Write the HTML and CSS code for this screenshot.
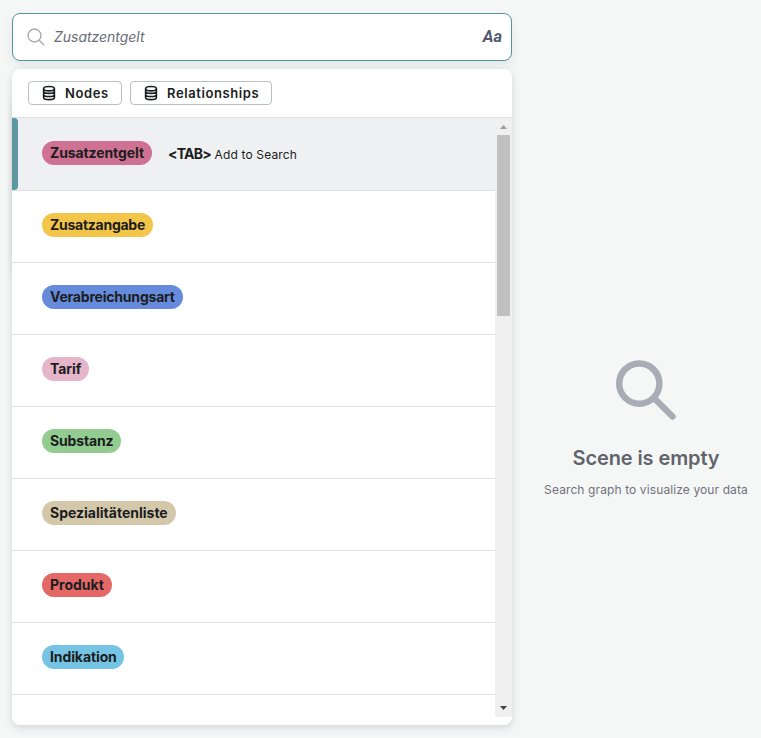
FILE: index.html
```html
<!DOCTYPE html>
<html lang="en">
<head>
<meta charset="utf-8">
<title>Graph search</title>
<link rel="stylesheet" href="styles.css">
</head>
<body>
<div class="app">
  <main class="search">
    <div class="search-box">
      <svg class="search-icon" viewBox="0 0 18 18"><circle cx="7.5" cy="7.5" r="6.5"/><path d="M12.2 12.2L16.7 16.7"/></svg>
      <span class="query">Zusatzentgelt</span>
      <span class="case">Aa</span>
    </div>
    <section class="panel">
      <header class="filters">
        <button class="filter nodes"><svg class="db" viewBox="0 0 14 16"><ellipse cx="7" cy="3.7" rx="5.4" ry="2.2"/><path d="M1.6 3.7v8.8c0 2.8 10.8 2.8 10.8 0v-8.8M1.6 6.3c0 2.8 10.8 2.8 10.8 0M1.6 9.4c0 2.8 10.8 2.8 10.8 0"/></svg><span>Nodes</span></button>
        <button class="filter relationships"><svg class="db" viewBox="0 0 14 16"><ellipse cx="7" cy="3.7" rx="5.4" ry="2.2"/><path d="M1.6 3.7v8.8c0 2.8 10.8 2.8 10.8 0v-8.8M1.6 6.3c0 2.8 10.8 2.8 10.8 0M1.6 9.4c0 2.8 10.8 2.8 10.8 0"/></svg><span>Relationships</span></button>
      </header>
      <div class="results">
        <ul class="list">
          <li class="row selected"><span class="pill zusatzentgelt">Zusatzentgelt</span><span class="hint"><b>&lt;TAB&gt;</b> <span class="action">Add to Search</span></span></li>
          <li class="row"><span class="pill zusatzangabe">Zusatzangabe</span></li>
          <li class="row"><span class="pill verabreichungsart">Verabreichungsart</span></li>
          <li class="row"><span class="pill tarif">Tarif</span></li>
          <li class="row"><span class="pill substanz">Substanz</span></li>
          <li class="row"><span class="pill spezialitaetenliste">Spezialitätenliste</span></li>
          <li class="row"><span class="pill produkt">Produkt</span></li>
          <li class="row"><span class="pill indikation">Indikation</span></li>
        </ul>
        <div class="scrollbar">
          <svg class="arrow up" viewBox="0 0 17 17"><path d="M5 11h7L8.5 7z"/></svg>
          <div class="thumb"></div>
          <svg class="arrow down" viewBox="0 0 17 17"><path d="M5 6h7L8.5 10z"/></svg>
        </div>
      </div>
    </section>
  </main>
  <aside class="empty">
    <svg class="empty-icon" viewBox="0 0 60 60"><circle cx="23.3" cy="23.6" r="20.1"/><path d="M39 39L56.5 56.5"/></svg>
    <h1 class="title">Scene is empty</h1>
    <p class="subtitle">Search graph to visualize your data</p>
  </aside>
</div>
</body>
</html>
```
FILE: styles.css
```css
* { box-sizing: border-box; }
body {
  margin: 0;
  background: #f5f7f7;
  color: #1b1d20;
  font-family: Inter, "Liberation Sans", sans-serif;
  overflow: hidden;
}
.app { display: flex; height: 738px; padding: 13px 0 13px 12px; }
.search { position: relative; z-index: 0; width: 500px; display: flex; flex-direction: column; gap: 8px; }
.search-box {
  height: 48px;
  display: flex;
  align-items: center;
  padding: 0 9px 0 14px;
  background: #fff;
  border: 1px solid #55939e;
  border-radius: 8px;
  box-shadow: 0 4px 8px rgba(12, 26, 37, .08);
}
.search-icon { width: 18px; height: 18px; fill: none; stroke: #a8abb3; stroke-width: 1.4; stroke-linecap: round; }
.query { margin-left: 9px; font: italic 14px/20px Inter, sans-serif; letter-spacing: -.03px; color: #696c74; }
.case { margin-left: auto; font: italic 700 16.5px/20px Roboto, sans-serif; color: #535b70; }
.panel {
  position: relative;
  height: 656px;
  background: #fff;
  border-radius: 8px;
  box-shadow: 0 4px 8px rgba(12, 26, 37, .1), 0 0 6px rgba(12, 26, 37, .06);
}
/* Shadow of the collapsed toolbar behind the panel */
.panel::before {
  content: "";
  position: absolute;
  z-index: -1;
  left: 0;
  top: 30px;
  width: 40px;
  height: 175px;
  border-radius: 8px;
  box-shadow: 0 2px 7px rgba(12, 26, 37, .1);
}
.filters { height: 49px; display: flex; gap: 8px; padding: 12px 16px; border-bottom: 1px solid #e0e1e3; }
.filter {
  height: 24px;
  display: flex;
  align-items: center;
  gap: 9px;
  padding: 0 0 0 13px;
  background: #fff;
  border: 1px solid #bbbec3;
  border-radius: 4px;
  color: #1b1d20;
  font: 600 13px/20px Inter, sans-serif;
  white-space: nowrap;
}
.nodes { width: 94px; letter-spacing: .6px; }
.relationships { width: 142px; letter-spacing: .6px; }
.db { width: 14px; height: 16px; flex: none; fill: none; stroke: #1b1d20; stroke-width: 1.6; }
.results { height: 599px; display: flex; }
.list { flex: 1; margin: 0; padding: 0; list-style: none; }
.row { height: 72px; display: flex; align-items: center; padding: 0 0 2px 30px; border-bottom: 1px solid #e0e1e3; }
.row.selected { height: 73px; padding: 0 0 2px 24px; background: #eff0f2; }
.row:not(.selected) { padding-bottom: 3px; }
.row.selected::before { content: ""; align-self: flex-start; width: 6px; height: 72px; margin-left: -24px; margin-right: 24px; background: #5d97a2; border-radius: 0 4px 4px 0; }
.pill { height: 24px; padding: 0 8px; border-radius: 12px; font-size: 14px; line-height: 24px; font-weight: 700; white-space: nowrap; }
.zusatzentgelt { width: 110px; background: #cf7192; letter-spacing: -.1px; }
.zusatzangabe { width: 111px; background: #f3c549; letter-spacing: -.26px; }
.verabreichungsart { width: 141px; background: #668bdc; letter-spacing: -.2px; }
.tarif { width: 47px; background: #e5b5ca; letter-spacing: -.1px; }
.substanz { width: 79px; background: #93cc90; letter-spacing: -.14px; }
.spezialitaetenliste { width: 134px; background: #d4c8ab; }
.produkt { width: 70px; background: #e46866; }
.indikation { width: 82px; background: #75c4e4; letter-spacing: -.1px; }
.hint { margin: 3px 0 0 16px; font-size: 12px; line-height: 20px; white-space: nowrap; }
.hint b { font-size: 14px; letter-spacing: -.75px; }
.action { letter-spacing: .16px; }
.scrollbar { width: 17px; display: flex; flex-direction: column; background: #f0f0f0; }
.arrow { width: 17px; height: 17px; flex: none; }
.up { fill: #9d9d9d; }
.down { margin-top: auto; fill: #444; }
.thumb { width: 13px; height: 181px; margin: 0 2px; background: #c1c1c1; }
.empty { flex: 1; display: flex; flex-direction: column; align-items: center; padding-top: 347px; padding-left: 19px; }
.empty-icon { width: 60px; height: 60px; flex: none; fill: none; stroke: #a9acb4; stroke-width: 6.4; stroke-linecap: round; }
.title { margin: 24px 0 0; font-size: 20px; line-height: 28px; font-weight: 600; letter-spacing: -.1px; color: #61646b; white-space: nowrap; }
.subtitle { margin: 8px 0 0; font-size: 12px; line-height: 20px; letter-spacing: .11px; color: #6f727a; white-space: nowrap; }
```
